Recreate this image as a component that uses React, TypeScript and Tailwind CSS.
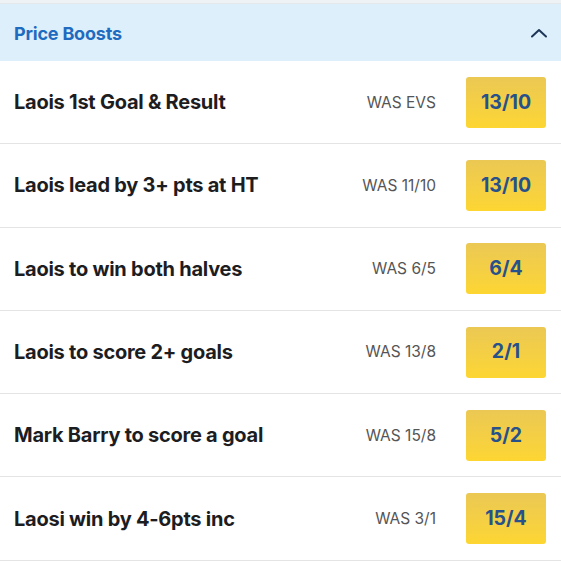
import React from "react";

const rows = [
  { name: "Laois 1st Goal & Result", was: "WAS EVS", odds: "13/10" },
  { name: "Laois lead by 3+ pts at HT", was: "WAS 11/10", odds: "13/10" },
  { name: "Laois to win both halves", was: "WAS 6/5", odds: "6/4" },
  { name: "Laois to score 2+ goals", was: "WAS 13/8", odds: "2/1" },
  { name: "Mark Barry to score a goal", was: "WAS 15/8", odds: "5/2" },
  { name: "Laosi win by 4-6pts inc", was: "WAS 3/1", odds: "15/4" },
];

export default function App() {
  return (
    <div className="w-[561px] h-[565px] bg-white font-['Inter',sans-serif] overflow-hidden">
      <div className="h-[4px] bg-[#eef2f5] border-b border-[#e3e8ec]" />
      <div className="h-[57px] bg-[#ddeffb] flex items-center justify-between pl-[14px] pr-[13px]">
        <span className="text-[18px] font-bold tracking-[-0.2px] text-[#1f6bbf] mt-[1px]">Price Boosts</span>
        <svg width="18" height="12" viewBox="0 0 18 12" fill="none">
          <path d="M2 9.5 L9 3 L16 9.5" stroke="#1d3557" strokeWidth="2" strokeLinecap="round" strokeLinejoin="round" />
        </svg>
      </div>
      {rows.map((r) => (
        <div
          key={r.name}
          className="h-[83.3px] border-b border-[#e4e4e4] flex items-center pl-[14px] pr-[15px]"
        >
          <span className="flex-1 text-[20px] font-bold tracking-[-0.25px] text-[#1d1d1f]">{r.name}</span>
          <span className="text-[15.5px] text-[#555555] mr-[30px]">{r.was}</span>
          <div className="w-[80px] h-[51px] rounded-[3px] bg-gradient-to-b from-[#ebc853] to-[#fdd631] flex items-center justify-center">
            <span className="text-[19.5px] font-bold text-[#27518a]">{r.odds}</span>
          </div>
        </div>
      ))}
    </div>
  );
}
